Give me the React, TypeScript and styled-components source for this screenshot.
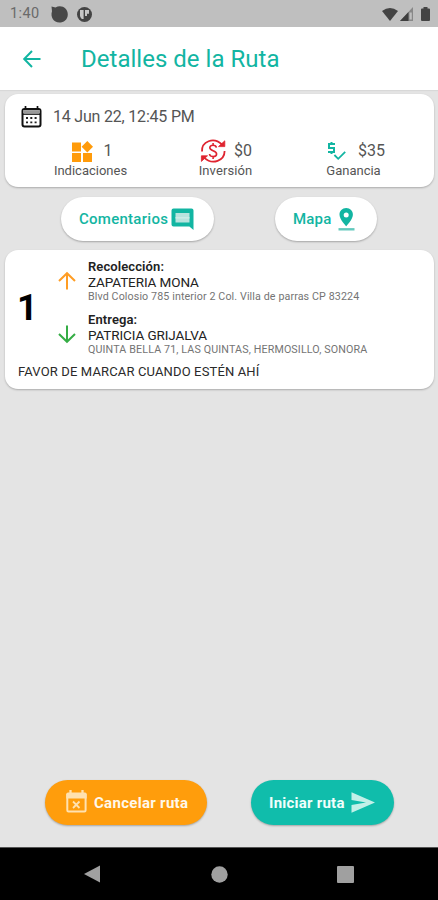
import React from "react";
import styled, { createGlobalStyle } from "styled-components";

const TEAL = "#12b5a2";

const Global = createGlobalStyle`
  *, *::before, *::after { box-sizing: border-box; }
  html, body { margin: 0; padding: 0; }
  body { font-family: Roboto, sans-serif; background: #e4e4e4; }
`;

const Screen = styled.div`
  width: 438px;
  height: 900px;
  display: flex;
  flex-direction: column;
  background: #e4e4e4;
  overflow: hidden;
`;

const StatusBar = styled.header`
  height: 27px;
  flex: none;
  display: flex;
  align-items: center;
  padding: 1px 8px 0 10px;
  background: #bfbfbf;
`;

const StatusIcons = styled.div<{ $gap: number; $left: string }>`
  display: flex;
  align-items: center;
  gap: ${(p) => p.$gap}px;
  margin-left: ${(p) => p.$left};
`;

const Label = styled.span<{
  $size: number;
  $line?: number;
  $weight?: number;
  $color?: string;
  $spacing?: number;
}>`
  display: block;
  white-space: nowrap;
  font-size: ${(p) => p.$size}px;
  line-height: ${(p) => p.$line ?? 16}px;
  font-weight: ${(p) => p.$weight ?? 400};
  color: ${(p) => p.$color ?? "#555"};
  letter-spacing: ${(p) => p.$spacing ?? 0}px;
`;

const Icon = styled.svg`
  display: block;
  flex: none;
  overflow: visible;
`;

const AppBar = styled.div`
  height: 63px;
  flex: none;
  display: flex;
  align-items: center;
  gap: 40px;
  padding: 0 23px;
  background: #fff;
  box-shadow: 0 1px 1px #d8d8d8;
`;

const Card = styled.section<{ $top: number; $height: number }>`
  height: ${(p) => p.$height}px;
  flex: none;
  margin: ${(p) => p.$top}px 4px 0 5px;
  background: #fff;
  border-radius: 13px;
  box-shadow: 0 1px 2px rgba(0, 0, 0, 0.25);
`;

const DateRow = styled.div`
  display: flex;
  align-items: center;
  height: 45px;
  gap: 11px;
  padding: 0 0 0 16px;
`;

const Stats = styled.div`
  display: grid;
  grid-template-columns: 171px 99px 157px;
`;

const Stat = styled.div`
  display: flex;
  flex-direction: column;
  align-items: center;
`;

const StatValue = styled.div<{ $gap: number; $shift?: number }>`
  display: flex;
  align-items: center;
  height: 24px;
  gap: ${(p) => p.$gap}px;
  margin-left: ${(p) => p.$shift ?? 0}px;
`;

const Pills = styled.div`
  display: flex;
  gap: 61px;
  margin: 10px 0 0 61px;
  height: 44px;
  flex: none;
`;

const Pill = styled.button<{ $width: number; $bg: string; $gap: number; $pad: number }>`
  width: ${(p) => p.$width}px;
  height: 100%;
  display: flex;
  align-items: center;
  gap: ${(p) => p.$gap}px;
  padding: 0 0 0 ${(p) => p.$pad}px;
  border: 0;
  border-radius: 23px;
  font-family: inherit;
  background: ${(p) => p.$bg};
  box-shadow: 0 1px 2px rgba(0, 0, 0, 0.28);
`;

const Route = styled.div`
  display: grid;
  grid-template-columns: 46px 37px 1fr;
  align-items: center;
  padding-top: 8px;
`;

const RouteNumber = styled.div`
  padding: 2px 0 0 12px;
  font-size: 36px;
  line-height: 40px;
  font-weight: 700;
  color: #000;
`;

const Arrows = styled.div`
  display: flex;
  flex-direction: column;
  gap: 35px;
  padding: 0 0 0 7px;
`;

const Stops = styled.div`
  display: flex;
  flex-direction: column;
  gap: 8px;
`;

const Note = styled.div`
  padding: 8px 0 0 13px;
`;

const Actions = styled(Pills)`
  gap: 44px;
  margin: auto 0 22px 45px;
  height: 45px;
`;

const NavBar = styled.nav`
  height: 53px;
  flex: none;
  display: flex;
  align-items: center;
  gap: 109.5px;
  padding-left: 83px;
  background: #000;
  border-top: 1px solid #555;
`;

const Arrow = ({ turn, color, size = 18 }: { turn: number; color: string; size?: number }) => (
  <Icon width={size} height={size} viewBox="0 0 18 18" fill="none" stroke={color} strokeWidth="2">
    <path d="M17.5 9H1.5M9 1L1.2 9L9 17" transform={`rotate(${turn} 9 9)`} />
  </Icon>
);

const CalendarIcon = () => (
  <Icon width="21" height="22" viewBox="0 0 21 22">
    <rect x="1.5" y="3" width="18" height="17.5" rx="2" fill="none" stroke="#111" strokeWidth="2" />
    <path d="M4.5 0v4M16.5 0v4" stroke="#111" strokeWidth="1.7" />
    <path d="M2 5.6h17" stroke="#999" strokeWidth="3" />
    <path d="M2 8.2h17" stroke="#111" strokeWidth="1.3" />
    <path d="M9.3 12h2M13.6 12h2M5 16.3h2M9.3 16.3h2M13.6 16.3h2M5 12h2" stroke="#222" strokeWidth="1.8" />
  </Icon>
);

const WidgetsIcon = () => (
  <Icon width="21" height="21" viewBox="0 0 21 21" fill="#ff9b0b">
    <path d="M0 1.5h9v9H0zM0 12h9v9H0zM11 12h9v9h-9zM15.3 0l5.7 5.7-5.7 5.7-5.7-5.7z" />
  </Icon>
);

const InvestmentIcon = () => (
  <Icon width="26" height="24" viewBox="0 0 26 24" fill="none" stroke="#df2430" strokeWidth="1.8">
    <path d="M2 12.5C1.5 2.5 13.5-2.5 22 5.5M24.6 12c0 9.5-12 14.5-20.2 6.8" />
    <path d="M18.5 7.6h6.3V1.8z" fill="#df2430" strokeWidth=".8" />
    <path d="M7.5 16.8H1.4v5.6z" fill="#df2430" strokeWidth=".8" />
    <path d="M16.4 8.6c-.5-3.2-6.6-3-6.6.2 0 3.3 6.8 2.6 6.8 6.2 0 3.5-6.7 3.5-7.1 0M13.1 4v2.4M13.1 17.6V20" strokeWidth="1.6" />
  </Icon>
);

const ProfitIcon = () => (
  <Icon width="19" height="20" viewBox="0 0 19 20" fill="none" stroke={TEAL} strokeWidth="2">
    <path d="M8 3H2v4h5v4H1M4.5 1v2M4.5 11v2" />
    <path d="M7.4 14l3.8 3.8 7-7" strokeWidth="1.8" />
  </Icon>
);

const CommentIcon = () => (
  <Icon width="23" height="22" viewBox="0 0 23 22">
    <path d="M2.5 .5H20.5Q22.5 .5 22.5 2.5V22L18.4 18.5H2.5Q.5 18.5 .5 16.5V2.5Q.5 .5 2.5 .5Z" fill={TEAL} />
    <path d="M4.5 5h14v9.5h-14z" fill="#b9e3de" />
    <path d="M4.5 9.8h14" stroke="#cfece8" strokeWidth="1.4" />
  </Icon>
);

const PinIcon = () => (
  <Icon width="17" height="23" viewBox="0 0 17 23">
    <path
      fill={TEAL}
      fillRule="evenodd"
      d="M8.2 0C4.2 0 1.5 3 1.5 6.7c0 4.7 6.7 11.5 6.7 11.5s6.7-6.8 6.7-11.5C14.9 3 12.2 0 8.2 0Zm0 4.4a2.5 2.5 0 1 1 0 5 2.5 2.5 0 0 1 0-5Z"
    />
    <path d="M.5 21.3h16" stroke="#62c9bd" strokeWidth="2.4" />
  </Icon>
);

const CancelIcon = () => (
  <Icon width="21" height="23" viewBox="0 0 21 23" fill="none" stroke="#ffe1b0">
    <path fill="#ffe1b0" stroke="none" d="M2 1.5h17q1.7 0 1.7 1.8V7.5H.3V3.3Q.3 1.5 2 1.5Z" />
    <rect x="1.3" y="3" width="18.3" height="17.5" rx="1.2" strokeWidth="2" />
    <path d="M4.5-1v4M16.5-1v4" strokeWidth="2.3" />
    <path d="M7 10.5l6.5 6.5M13.5 10.5L7 17" strokeWidth="1.8" />
  </Icon>
);

const SendIcon = () => (
  <Icon width="24" height="21" viewBox="0 0 24 21">
    <path d="M.5.3L24 10.5.5 20.7V13L15 10.5.5 8z" fill="#c2f0e8" />
  </Icon>
);

const StatusBlob = () => (
  <Icon width="17" height="17" viewBox="0 0 17 17" fill="#484848">
    <path d="M.5 .5l4 1C10-1.8 17 2 16.8 8.5 16.7 14 12.5 16.5 8.5 16.5 2.5 16.5-.8 10.8 1 5.2Z" />
  </Icon>
);

const StatusLogo = () => (
  <Icon width="15" height="15" viewBox="0 0 15 15">
    <circle cx="7.5" cy="7.5" r="7.5" fill="#444" />
    <path d="M3 3h3.6v9h-1.8q-1.8-1.7-1.8-3.2zM8 3h4v3.8h-2v2.2h-2z" fill="#c8c8c8" />
  </Icon>
);

const WifiIcon = () => (
  <Icon width="16" height="13" viewBox="0 0 16 13" fill="#444">
    <path d="M0 3Q8-3 16 3L8 13Z" />
  </Icon>
);

const SignalIcon = () => (
  <Icon width="13" height="14" viewBox="0 0 13 14">
    <path d="M0 14L13 0V14Z" fill="#888" />
    <path d="M0 14L8.5 4.9V14Z" fill="#3e3e3e" />
    <path d="M9.5 5.5h2.3v7H9.5z" fill="#bfbfbf" />
  </Icon>
);

const BatteryIcon = () => (
  <Icon width="9" height="14" viewBox="0 0 9 14" fill="#444">
    <path d="M2.5 0h4v1.5H8q1 0 1 1V13q0 1-1 1H1q-1 0-1-1V2.5q0-1 1-1h1.5z" />
  </Icon>
);

const Stop = ({ title, name, address, nameSpacing, addressSpacing }: {
  title: string;
  name: string;
  address: string;
  nameSpacing: number;
  addressSpacing: number;
}) => (
  <div>
    <Label $size={13} $line={17} $weight={600} $color="#222" $spacing={0.1}>{title}</Label>
    <Label $size={13.5} $line={15} $color="#222" $spacing={nameSpacing}>{name}</Label>
    <Label $size={10.7} $line={13} $color="#747474" $spacing={addressSpacing}>{address}</Label>
  </div>
);

export default function App() {
  return (
    <Screen>
      <Global />
      <StatusBar>
        <Label $size={14.5} $color="#6a6a6a" $spacing={0.4}>1:40</Label>
        <StatusIcons $gap={9} $left="11px">
          <StatusBlob />
          <StatusLogo />
        </StatusIcons>
        <StatusIcons $gap={2} $left="auto">
          <WifiIcon />
          <SignalIcon />
        </StatusIcons>
        <StatusIcons $gap={0} $left="8px">
          <BatteryIcon />
        </StatusIcons>
      </StatusBar>

      <AppBar>
        <Arrow turn={0} color={TEAL} />
        <Label $size={24} $line={30} $color={TEAL} $spacing={0.02}>Detalles de la Ruta</Label>
      </AppBar>

      <Card $top={4} $height={93}>
        <DateRow>
          <CalendarIcon />
          <Label $size={16} $spacing={-0.2}>14 Jun 22, 12:45 PM</Label>
        </DateRow>
        <Stats>
          <Stat>
            <StatValue $gap={11} $shift={3}>
              <WidgetsIcon />
              <Label $size={16}>1</Label>
            </StatValue>
            <Label $size={13}>Indicaciones</Label>
          </Stat>
          <Stat>
            <StatValue $gap={8} $shift={1}>
              <InvestmentIcon />
              <Label $size={16}>$0</Label>
            </StatValue>
            <Label $size={13} $spacing={0.1}>Inversión</Label>
          </Stat>
          <Stat>
            <StatValue $gap={12} $shift={5}>
              <ProfitIcon />
              <Label $size={16}>$35</Label>
            </StatValue>
            <Label $size={13}>Ganancia</Label>
          </Stat>
        </Stats>
      </Card>

      <Pills>
        <Pill $width={153} $bg="#fff" $gap={3} $pad={18}>
          <Label $size={15} $weight={500} $color={TEAL} $spacing={0.27}>Comentarios</Label>
          <CommentIcon />
        </Pill>
        <Pill $width={102} $bg="#fff" $gap={6} $pad={18}>
          <Label $size={15} $weight={500} $color={TEAL} $spacing={0.2}>Mapa</Label>
          <PinIcon />
        </Pill>
      </Pills>

      <Card $top={9} $height={139}>
        <Route>
          <RouteNumber>1</RouteNumber>
          <Arrows>
            <Arrow turn={90} color="#ff9d24" />
            <Arrow turn={-90} color="#35ad45" />
          </Arrows>
          <Stops>
            <Stop
              title="Recolección:"
              name="ZAPATERIA MONA"
              address="Blvd Colosio 785 interior 2 Col. Villa de parras CP 83224"
              nameSpacing={-0.1}
              addressSpacing={0.11}
            />
            <Stop
              title="Entrega:"
              name="PATRICIA GRIJALVA"
              address="QUINTA BELLA 71, LAS QUINTAS, HERMOSILLO, SONORA"
              nameSpacing={-0.1}
              addressSpacing={0.14}
            />
          </Stops>
        </Route>
        <Note>
          <Label $size={13} $color="#2a2a2a" $spacing={0.14}>FAVOR DE MARCAR CUANDO ESTÉN AHÍ</Label>
        </Note>
      </Card>

      <Actions>
        <Pill $width={162} $bg="#ff9d0c" $gap={7} $pad={21}>
          <CancelIcon />
          <Label $size={15} $weight={700} $color="#fff8eb" $spacing={0.3}>Cancelar ruta</Label>
        </Pill>
        <Pill $width={143} $bg="#10bdab" $gap={6} $pad={18}>
          <Label $size={15} $weight={700} $color="#f0fffc" $spacing={0.24}>Iniciar ruta</Label>
          <SendIcon />
        </Pill>
      </Actions>

      <NavBar>
        <Icon width="18" height="18" viewBox="0 0 18 18" fill="#a0a0a0">
          <path d="M1 9L17 .5v17z" />
        </Icon>
        <Icon width="17" height="17" viewBox="0 0 17 17" fill="#a0a0a0">
          <circle cx="8.5" cy="8.5" r="8.2" />
        </Icon>
        <Icon width="17" height="17" viewBox="0 0 17 17" fill="#a0a0a0">
          <rect width="17" height="17" rx="1" />
        </Icon>
      </NavBar>
    </Screen>
  );
}
